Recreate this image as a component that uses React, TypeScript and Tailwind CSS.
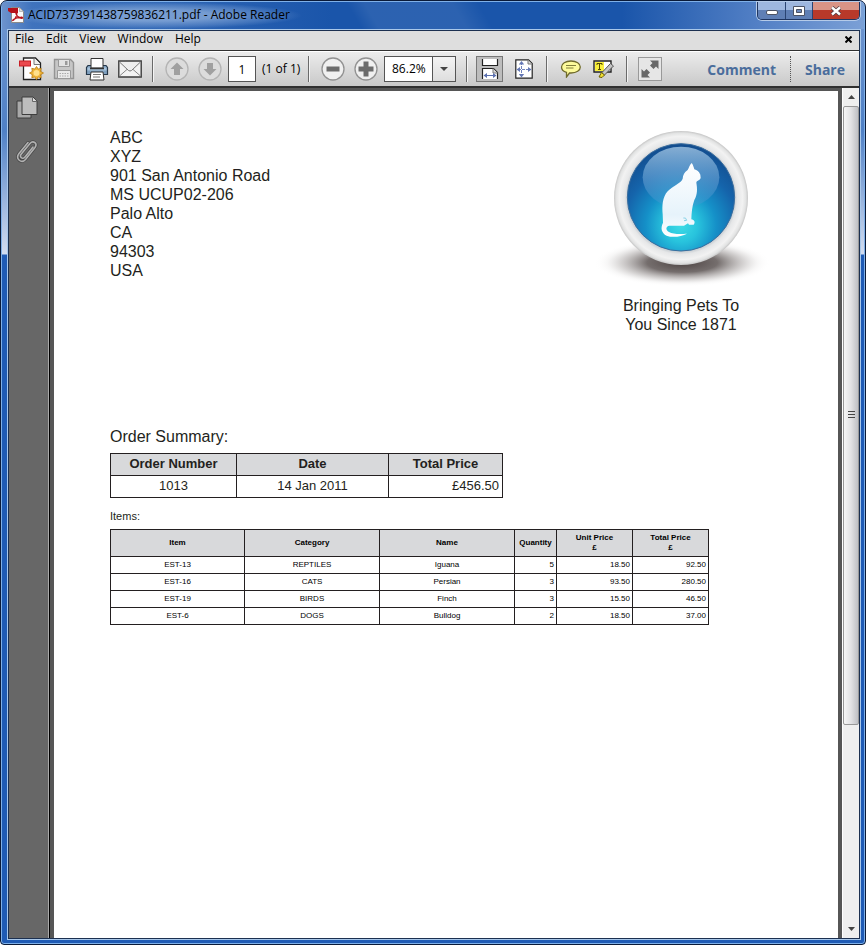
import type { ReactNode } from "react";

const address = ["ABC", "XYZ", "901 San Antonio Road", "MS UCUP02-206", "Palo Alto", "CA", "94303", "USA"];

const items = [
  { id: "EST-13", category: "REPTILES", name: "Iguana", qty: 5, unit: "18.50", total: "92.50" },
  { id: "EST-16", category: "CATS", name: "Persian", qty: 3, unit: "93.50", total: "280.50" },
  { id: "EST-19", category: "BIRDS", name: "Finch", qty: 3, unit: "15.50", total: "46.50" },
  { id: "EST-6", category: "DOGS", name: "Bulldog", qty: 2, unit: "18.50", total: "37.00" },
];

function Separator() {
  return <div className="mx-1.5 h-[26px] w-0.5 shrink-0 border-l border-[#6a6a6a] bg-[#f4f4f4]" />;
}

function ToolButton({ label, disabled, children }: { label: string; disabled?: boolean; children: ReactNode }) {
  return (
    <button
      type="button"
      aria-label={label}
      disabled={disabled}
      className="flex h-7 w-[33px] shrink-0 items-center justify-center"
    >
      {children}
    </button>
  );
}

function PdfLogo() {
  return (
    <svg width="16" height="16" viewBox="0 0 16 16" aria-hidden="true">
      <path d="M3.5.5h8l4 4v11h-12z" fill="#fbfbfb" stroke="#8a8a8a" />
      <path d="M11.500.5v4h4z" fill="#ddd" stroke="#999" strokeWidth=".6" />
      <path d="M0 1h10v5H3L0 4z" fill="#b5121b" />
      <path d="M5 13.500c2-1 4-5 4-8 0-1.500-1.500-1.500-1.300.3C8 8.500 11 11 13.800 11.400c1.500 0 1-1.500-.8-1.300-3 .1-6 1.200-7.500 2.400-1.300 1-.8 1.500-.5 1z" fill="none" stroke="#b5121b" strokeWidth="1.200" />
    </svg>
  );
}

function CreateIcon() {
  return (
    <svg width="26" height="26" viewBox="0 0 26 26" aria-hidden="true">
      <path d="M5.500 2h12l5 5v16.500h-17z" fill="#fff" stroke="#222" strokeWidth="1.300" />
      <path d="M16 2.500v6h6" fill="#eee" stroke="#777" />
      <rect x="1.500" y="5" width="11" height="5" fill="#ea4a4f" stroke="#c81e25" />
      <path d="m18.500 10.500 1.700 2.600 3-.8-.5 3.100 2.800 1.600-2.800 1.700.5 3-3-.7-1.700 2.700-1.700-2.700-3 .7.500-3-2.800-1.700 2.800-1.600-.5-3.100 3 .8z" fill="#f0b63a" stroke="#b97b13" strokeWidth=".8" />
      <circle cx="18.500" cy="17" r="3" fill="#ffe08a" />
    </svg>
  );
}

function SaveIcon() {
  return (
    <svg width="22" height="22" viewBox="0 0 22 22" aria-hidden="true">
      <path d="M1.500 1.500h16l3 3v16h-19z" fill="#c6c6c6" stroke="#949494" strokeWidth="1.400" />
      <path d="M5.500 1.500h11v7h-11z" fill="#e2e2e2" stroke="#999" />
      <path d="M12 3h2.500v4H12z" fill="#999" />
      <path d="M4.500 12.500h13v8h-13z" fill="#e9e9e9" stroke="#999" />
      <path d="M6.500 15.500h9M6.500 18h9" stroke="#aaa" strokeDasharray="1.500 1" />
    </svg>
  );
}

function PrintIcon() {
  return (
    <svg width="24" height="24" viewBox="0 0 24 24" aria-hidden="true">
      <path d="M3 8.500h18l1.500 2v7h-21v-7z" fill="#7fa0bf" stroke="#26384a" strokeWidth="1.200" />
      <path d="M2.500 10.500h19v3h-19z" fill="#a9c4dc" />
      <path d="M6 1.500h12v9.500H6z" fill="#fff" stroke="#333" />
      <path d="M5 11.500h14" stroke="#333" strokeWidth="1.400" />
      <path d="M6 15h12l1 8H5z" fill="#fff" stroke="#333" />
      <path d="M8 17.500h8M8 20h7" stroke="#777" />
    </svg>
  );
}

function MailIcon() {
  return (
    <svg width="24" height="18" viewBox="0 0 24 18" aria-hidden="true">
      <path d="M.8 1h22.400v16H.8z" fill="#f3f3f3" stroke="#3c3c3c" strokeWidth="1.400" />
      <path d="m1.500 16 8-7M22.500 16l-8-7" stroke="#888" />
      <path d="m1.500 2 9 8.500q1.500 1 3 0l9-8.500" fill="#eee" stroke="#777" />
    </svg>
  );
}

function ArrowIcon({ down }: { down?: boolean }) {
  return (
    <svg width="24" height="24" viewBox="0 0 24 24" aria-hidden="true" className={down ? "rotate-180" : ""}>
      <circle cx="12" cy="12" r="11" fill="#dcdcdc" stroke="#b4b4b4" strokeWidth="1.300" />
      <path d="m12 5.500 6.500 6.500H15v6H9v-6H5.500z" fill="#a0a0a0" />
    </svg>
  );
}

function ZoomIcon({ plus }: { plus?: boolean }) {
  return (
    <svg width="24" height="24" viewBox="0 0 24 24" aria-hidden="true">
      <circle cx="12" cy="12" r="11" fill="#f0f0f0" stroke="#929292" strokeWidth="1.300" />
      <path d={plus ? "M9.500 4.500h5v5h5v5h-5v5h-5v-5h-5v-5h5z" : "M5.500 9.500h13v5h-13z"} fill="#6c6c6c" />
    </svg>
  );
}

function FitWidthIcon() {
  return (
    <svg width="18" height="20" viewBox="0 0 18 20" aria-hidden="true">
      <path d="M1.500 0v6.500h15V0" fill="#fff" stroke="#222" strokeWidth="1.200" />
      <path d="M1.500 20V9.500h11l4 4V20" fill="#fff" stroke="#222" strokeWidth="1.200" />
      <path d="M12 9.500V14h4.500" fill="#ddd" stroke="#777" />
      <path d="M4 16.500h10" stroke="#5b70ae" />
      <path d="m6 14-3.500 2.500L6 19zM12 14l3.500 2.500L12 19z" fill="#5b70ae" />
    </svg>
  );
}

function FitPageIcon() {
  return (
    <svg width="18" height="20" viewBox="0 0 18 20" aria-hidden="true">
      <path d="M.8.8h12.700l3.700 3.700v14.700H.8z" fill="#fff" stroke="#222" strokeWidth="1.200" />
      <path d="M13 1v4h4" fill="#ddd" stroke="#777" />
      <path d="M6.500 3v14M3 10.500h12" stroke="#7183bd" strokeDasharray="3 1" />
      <path d="M3.800 5.500 6.500 2l2.700 3.500zM3.800 15 6.500 18.500 9.200 15zM5 8 1.500 10.500 5 13zM13 8l3.500 2.500L13 13z" fill="#6478b6" />
    </svg>
  );
}

function CommentIcon() {
  return (
    <svg width="22" height="18" viewBox="0 0 22 18" aria-hidden="true">
      <path d="M11 1c5.500 0 9.300 2.500 9.300 6s-3.800 6-9.300 6H9.500L6.500 17v-4.700C3.500 11.500 1.500 9.500 1.500 7c0-3.500 4-6 9.500-6z" fill="#fdfb9b" stroke="#6f6a2c" strokeWidth="1.300" />
      <path d="M6 5.500h10M6 8h7.500" stroke="#82803c" />
    </svg>
  );
}

function HighlightIcon() {
  return (
    <svg width="22" height="18" viewBox="0 0 22 18" aria-hidden="true">
      <path d="M1 1h17v11H1z" fill="#fff" stroke="#222" strokeWidth="1.400" />
      <path d="M2 2h9v9H2z" fill="#f9f03c" />
      <path d="M4 5V3.500h5V5M6.500 3.500v6M5 9.500h3" fill="none" stroke="#554b00" />
      <path d="m17.500 3.500 3 2.500-9 9-3-2z" fill="#c4c4c4" stroke="#555" />
      <path d="m8.500 12.500 3 2.500-2.500 2.500-3-.5z" fill="#f0df35" stroke="#6c6100" />
    </svg>
  );
}

function PetLogo() {
  return (
    <svg width="180" height="160" viewBox="4 24 540 480" role="img" aria-label="Pet store logo">
      <defs>
        <radialGradient id="shade">
          <stop offset="0" stopColor="#4d4443" />
          <stop offset=".4" stopColor="#5c5453" stopOpacity=".85" />
          <stop offset=".7" stopColor="#8b8584" stopOpacity=".35" />
          <stop offset=".85" stopColor="#aaa6a5" stopOpacity=".1" />
          <stop offset="1" stopColor="#fff" stopOpacity="0" />
        </radialGradient>
        <radialGradient id="ring">
          <stop offset=".79" stopColor="#c3c9ce" />
          <stop offset=".84" stopColor="#e6e7e8" />
          <stop offset=".92" stopColor="#f2f2f2" />
          <stop offset=".97" stopColor="#e2e3e3" />
          <stop offset="1" stopColor="#c6c6c6" />
        </radialGradient>
        <radialGradient id="ball" cx=".5" cy=".76" r=".78">
          <stop offset="0" stopColor="#3ddce6" />
          <stop offset=".2" stopColor="#28c3dd" />
          <stop offset=".42" stopColor="#1590c8" />
          <stop offset=".68" stopColor="#1564ab" />
          <stop offset="1" stopColor="#12498a" />
        </radialGradient>
        <linearGradient id="gloss" x2="0" y2="1">
          <stop stopColor="#a3c6e4" stopOpacity=".8" />
          <stop offset="1" stopColor="#4a92cf" stopOpacity=".3" />
        </linearGradient>
        <linearGradient id="cat" x2="0" y2="1">
          <stop stopColor="#fff" />
          <stop offset=".7" stopColor="#e6f3fb" />
          <stop offset="1" stopColor="#fff" />
        </linearGradient>
      </defs>
      <ellipse cx="278" cy="428" rx="264" ry="72" fill="url(#shade)" />
      <circle cx="274" cy="234" r="201" fill="url(#ring)" />
      <circle cx="274" cy="232" r="161" fill="url(#ball)" stroke="#3a6d9e" strokeWidth="3" />
      <ellipse cx="274" cy="172" rx="115" ry="92" fill="url(#gloss)" />
      <path
        d="M306 129C300 135 298 143 294 150C284 156 280 165 279 176C274 190 249 197 234 214C218 232 217 258 219 282L220 308C212 324 215 339 231 347C249 354 275 350 292 341C278 342 251 344 238 336C227 329 228 319 239 317H283L295 310L298 314H312C318 307 314 300 305 298C306 277 307 259 314 240C324 223 323 205 320 188C321 181 329 183 333 174L332 164C328 154 322 151 314 148C312 141 310 134 306 129Z"
        fill="url(#cat)"
      />
      <path d="M281 294q8-3 10 7l-8 1" fill="none" stroke="#8ad3e8" strokeWidth="3" />
    </svg>
  );
}

function TitleBar() {
  return (
    <header className="flex h-[27px] shrink-0 items-start bg-[linear-gradient(60deg,transparent_41%,#ffffff14_43%,#ffffff14_53%,transparent_56%),linear-gradient(90deg,#6d93cd_0,#3f73bd_30px,#1a55aa_330px,#1a55aa_620px,#5481c6_760px,#7ba0d6_100%)] pl-1.5">
      <div className="flex h-full items-center gap-1 bg-[radial-gradient(closest-side,#9ab8e0aa_40%,#7fa3d655_80%,transparent)] pr-3 pb-0.5">
        <PdfLogo />
        <h1 className="whitespace-nowrap text-[12px] leading-4 text-black">ACID737391438759836211.pdf - Adobe Reader</h1>
      </div>
      <div className="ml-auto mr-1 flex h-[18px] overflow-hidden rounded-b-[5px] border border-t-0 border-[#1f3560] shadow-[0_0_0_1px_#b5cbe9]">
        <button type="button" aria-label="Minimize" className="flex w-7 items-end justify-center border-r border-[#2a4472] bg-linear-to-b from-[#9eb7df] from-45% to-[#5f7fb5] to-50% pb-1">
          <span className="h-[5px] w-3 rounded-xs border border-[#4c5365] bg-white" />
        </button>
        <button type="button" aria-label="Maximize" className="flex w-[27px] items-center justify-center border-r border-[#2a4472] bg-linear-to-b from-[#9eb7df] from-45% to-[#5f7fb5] to-50%">
          <svg width="12" height="10" viewBox="0 0 12 10" aria-hidden="true">
            <path d="M.5.5h11v9H.5z" fill="#fff" stroke="#4c5365" />
            <path d="M3.500 3.500h5v3h-5z" fill="#6d8abd" stroke="#4c5365" />
          </svg>
        </button>
        <button type="button" aria-label="Close window" className="flex w-[46px] items-center justify-center bg-linear-to-b from-[#d99486] from-45% to-[#b8392a] to-50%">
          <svg width="12" height="10" viewBox="0 0 12 10" aria-hidden="true">
            <path d="m2 1.500 8 7M10 1.500l-8 7" stroke="#4c3b43" strokeWidth="4" />
            <path d="m2 1.500 8 7M10 1.500l-8 7" stroke="#fff" strokeWidth="2.400" />
          </svg>
        </button>
      </div>
    </header>
  );
}

function Toolbar() {
  return (
    <div className="flex h-[37px] shrink-0 items-center overflow-hidden border-b-2 border-[#303030] border-t border-t-white bg-linear-to-b from-[#ececec] to-[#c9c9c9] pl-[5px] text-[12px]">
      <ToolButton label="Create PDF"><CreateIcon /></ToolButton>
      <ToolButton label="Save" disabled><SaveIcon /></ToolButton>
      <ToolButton label="Print"><PrintIcon /></ToolButton>
      <ToolButton label="Email"><MailIcon /></ToolButton>
      <Separator />
      <ToolButton label="Previous page" disabled><ArrowIcon /></ToolButton>
      <ToolButton label="Next page" disabled><ArrowIcon down /></ToolButton>
      <input aria-label="Page number" defaultValue="1" className="mx-0.5 h-[26px] w-7 shrink-0 border border-[#555] bg-white text-center text-black" />
      <span className="ml-1 w-10 shrink-0 whitespace-nowrap text-black">(1 of 1)</span>
      <Separator />
      <ToolButton label="Zoom out"><ZoomIcon /></ToolButton>
      <ToolButton label="Zoom in"><ZoomIcon plus /></ToolButton>
      <div className="ml-0.5 mr-1 grid h-[26px] w-[72px] shrink-0 grid-cols-[1fr_23px] border border-[#555] bg-white">
        <select aria-label="Zoom level" defaultValue="86.2%" className="col-span-2 col-start-1 row-start-1 appearance-none bg-transparent pl-[7px] text-black">
          <option>86.2%</option>
          <option>100%</option>
        </select>
        <span className="pointer-events-none col-start-2 row-start-1 flex items-center justify-center border-l border-[#555] bg-linear-to-b from-[#f4f4f4] to-[#dedede]">
          <svg width="8" height="4" viewBox="0 0 8 4" aria-hidden="true"><path d="M0 0h8L4 4z" fill="#444" /></svg>
        </span>
      </div>
      <Separator />
      <button type="button" aria-label="Fit width" className="ml-0.5 mr-1 flex h-[26px] w-[27px] shrink-0 items-center justify-center border border-[#777] bg-[#bdbdbd]">
        <FitWidthIcon />
      </button>
      <ToolButton label="Fit page"><FitPageIcon /></ToolButton>
      <Separator />
      <ToolButton label="Add sticky note"><CommentIcon /></ToolButton>
      <ToolButton label="Highlight text"><HighlightIcon /></ToolButton>
      <Separator />
      <button type="button" aria-label="Read mode" className="ml-1 flex h-6 w-6 shrink-0 items-center justify-center border border-[#999] bg-[#e6e6e6]">
        <svg width="20" height="20" viewBox="0 0 20 20" aria-hidden="true">
          <path d="M10 1.500h8.500V10l-2.500-2.500-2.500 2.500L10 6.500 12.500 4zM1.500 10v8.500H10L7.500 16l2.500-2.500L6.500 10 4 12.500z" fill="#686868" />
        </svg>
      </button>
      <div className="ml-auto flex shrink-0 items-center font-['Open_Sans',sans-serif] text-[14px] font-bold text-[#4a6d9c]">
        <button type="button" className="px-3.5">Comment</button>
        <div className="h-[26px] border-l border-dotted border-[#555]" />
        <button type="button" className="px-3.5">Share</button>
      </div>
    </div>
  );
}

function SidePanel() {
  return (
    <nav aria-label="Navigation panels" className="flex w-[41px] shrink-0 flex-col items-center gap-[18px] border-r border-black bg-[#676767] pr-1 pt-2 shadow-[inset_-1px_0_#a9a9a9]">
      <button type="button" aria-label="Page thumbnails">
        <svg width="22" height="24" viewBox="0 0 22 24" aria-hidden="true">
          <path d="M1 5h14v17H1z" fill="#a9a9a9" stroke="#3d3d3d" />
          <path d="M6 1h11l4 4v13.500H6z" fill="#bdbdbd" stroke="#3d3d3d" />
          <path d="M16.500 1.500v4H21" fill="#ddd" stroke="#666" />
        </svg>
      </button>
      <button type="button" aria-label="Attachments">
        <svg width="22" height="26" viewBox="0 0 22 26" aria-hidden="true" fill="none" strokeLinecap="round">
          <path d="m17 9-8 10c-2.500 3-6 0-3.700-3L14 5.500c3-3.500 8-.5 5 4L9.500 21.500c-4 4.500-10.500-.5-6.500-6L12 4.500" stroke="#484848" strokeWidth="3" />
          <path d="m17 9-8 10c-2.500 3-6 0-3.700-3L14 5.500c3-3.500 8-.5 5 4L9.500 21.500c-4 4.500-10.500-.5-6.500-6L12 4.500" stroke="#b2b2b2" strokeWidth="1.600" />
        </svg>
      </button>
    </nav>
  );
}

function Scrollbar() {
  return (
    <div className="flex w-[17px] shrink-0 flex-col border-l border-white bg-[#efefef]">
      <button type="button" aria-label="Scroll up" className="flex h-[18px] shrink-0 items-center justify-center">
        <svg width="7" height="4" viewBox="0 0 7 4" aria-hidden="true"><path d="M0 4h7L3.500 0z" fill="#444" /></svg>
      </button>
      <div className="flex grow flex-col">
        <div className="flex h-[76%] items-center justify-center rounded-xs border border-[#989898] bg-linear-to-r from-[#f6f6f6] via-[#e2e2e4] to-[#bfc0c4]">
          <svg width="7" height="8" viewBox="0 0 7 8" aria-hidden="true"><path d="M0 .5h7M0 3.500h7M0 6.500h7" stroke="#444" /></svg>
        </div>
      </div>
      <button type="button" aria-label="Scroll down" className="flex h-[18px] shrink-0 items-center justify-center">
        <svg width="7" height="4" viewBox="0 0 7 4" aria-hidden="true"><path d="M0 0h7L3.500 4z" fill="#444" /></svg>
      </button>
    </div>
  );
}

function OrderDocument() {
  const cell = "border border-[#231f20] p-0 pb-px";
  const amount = "border border-[#231f20] p-0 pb-px pr-0.5 text-right";
  return (
    <article className="min-w-0 grow overflow-hidden bg-white pl-14 pt-[37px] font-['Liberation_Sans',Arial,sans-serif] text-base leading-[19px] text-[#231f20]">
      <div className="flex justify-between pr-[67px]">
        <address className="not-italic">
          {address.map((line) => <div key={line}>{line}</div>)}
        </address>
        <div className="text-center">
          <PetLogo />
          <p className="mt-2">Bringing Pets To<br />You Since 1871</p>
        </div>
      </div>
      <h2 className="mt-[93px]">Order Summary:</h2>
      <table className="mt-[7px] w-[393px] table-fixed border-collapse text-[13px] leading-5">
        <colgroup><col className="w-[126px]" /><col className="w-[152px]" /><col className="w-[114px]" /></colgroup>
        <thead className="bg-[#d8d9db]">
          <tr><th className={cell}>Order Number</th><th className={cell}>Date</th><th className={cell}>Total Price</th></tr>
        </thead>
        <tbody className="text-center">
          <tr>
            <td className={cell}>1013</td>
            <td className={cell}>14 Jan 2011</td>
            <td className="border border-[#231f20] p-0 pb-px pr-[3px] text-right">£456.50</td>
          </tr>
        </tbody>
      </table>
      <h3 className="mt-3 text-[11px] leading-3">Items:</h3>
      <table className="mt-[7px] w-[599px] table-fixed border-collapse text-[8px] leading-[15px] text-black">
        <colgroup>
          <col className="w-[134px]" /><col className="w-[135px]" /><col className="w-[135px]" />
          <col className="w-[42px]" /><col className="w-[76px]" /><col className="w-[76px]" />
        </colgroup>
        <thead className="bg-[#d8d9db] leading-[10px]">
          <tr className="h-[27px]">
            <th className={cell}>Item</th>
            <th className={cell}>Category</th>
            <th className={cell}>Name</th>
            <th className={cell}>Quantity</th>
            <th className={cell}>Unit Price<br />£</th>
            <th className={cell}>Total Price<br />£</th>
          </tr>
        </thead>
        <tbody className="text-center">
          {items.map((item) => (
            <tr key={item.id}>
              <td className={cell}>{item.id}</td>
              <td className={cell}>{item.category}</td>
              <td className={cell}>{item.name}</td>
              <td className={amount}>{item.qty}</td>
              <td className={amount}>{item.unit}</td>
              <td className={amount}>{item.total}</td>
            </tr>
          ))}
        </tbody>
      </table>
    </article>
  );
}

export default function App() {
  return (
    <div className="flex h-screen flex-col overflow-hidden rounded-t-[7px] rounded-b-[4px] border border-[#0a1a38] bg-[linear-gradient(180deg,#7398d0_0,#4f80c6_130px,#d3ddf0_253px,#1f5bb5_254px,#1f5bb5_100%)] font-['Open_Sans','Noto_Sans',sans-serif] shadow-[inset_0_0_0_1px_#7fb0e8]">
      <div className="m-px mb-0"><TitleBar /></div>
      <div className="mb-1 ml-1.5 mr-1 flex min-h-0 grow flex-col border border-[#a9c8ea]">
        <div className="flex min-h-0 grow flex-col border border-[#1c3050]">
          <nav aria-label="Menu" className="flex h-5 shrink-0 items-center gap-3 border-b border-[#303030] bg-[#dedede] pb-[3px] pl-1.5 text-[12px] leading-4 text-black">
            {["File", "Edit", "View", "Window", "Help"].map((item) => (
              <button type="button" key={item}>{item}</button>
            ))}
            <button type="button" aria-label="Close document" className="ml-auto mr-[7px]">
              <svg width="7" height="7" viewBox="0 0 7 7" aria-hidden="true"><path d="m.5.500 6 6M6.500.5l-6 6" stroke="#000" strokeWidth="2" /></svg>
            </button>
          </nav>
          <Toolbar />
          <main className="flex min-h-0 grow bg-[#565656]">
            <SidePanel />
            <div className="flex min-w-0 grow pl-1 pr-1 pt-[3px]">
              <OrderDocument />
            </div>
            <Scrollbar />
          </main>
        </div>
      </div>
    </div>
  );
}
